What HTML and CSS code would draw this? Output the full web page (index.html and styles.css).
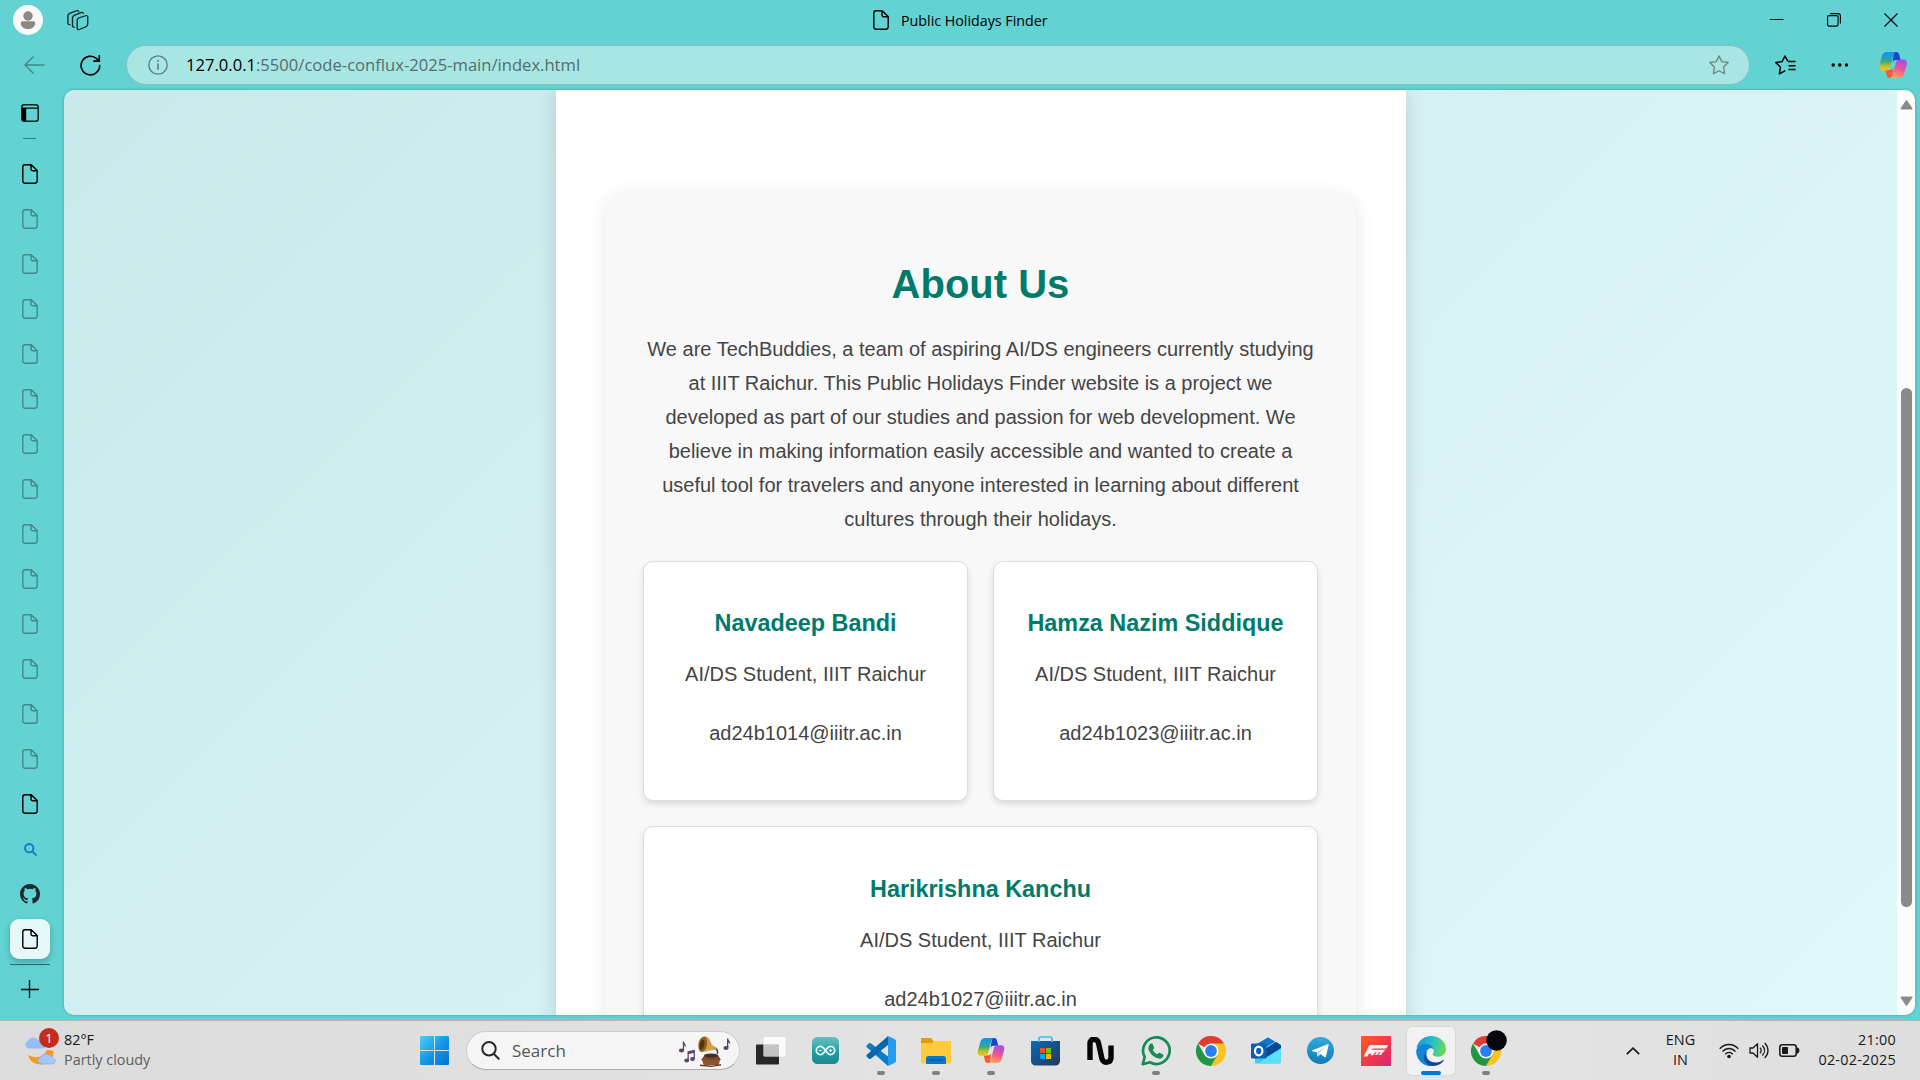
FILE: index.html
```
<!DOCTYPE html>
<html lang="en">
<head>
<meta charset="utf-8">
<title>Public Holidays Finder</title>
<link rel="stylesheet" href="styles.css">
</head>
<body>
<svg class="defs" width="0" height="0">
  <defs>
    <symbol id="doc" viewBox="0 0 16 20"><path d="M3 .8h6.2L15.200 6.500V17a2.200 2.200 0 0 1-2.200 2.200H3A2.200 2.200 0 0 1 .8 17V3A2.200 2.200 0 0 1 3 .8zM9 1v4a1.800 1.800 0 0 0 1.800 1.800H15" fill="none" stroke="currentColor" stroke-width="1.400" stroke-linejoin="round"/></symbol>
    <linearGradient id="cp1" x1="0" y1="0" x2="0" y2="1"><stop offset=".1" stop-color="#1496ee"/><stop offset=".5" stop-color="#3aa888"/><stop offset=".75" stop-color="#b5c22a"/><stop offset="1" stop-color="#f8c51b"/></linearGradient>
    <linearGradient id="cp2" x1=".6" y1="0" x2=".3" y2="1"><stop offset="0" stop-color="#a64df0"/><stop offset=".5" stop-color="#f0568f"/><stop offset="1" stop-color="#ffa65a"/></linearGradient>
    <symbol id="copilot" viewBox="0 0 28 26">
      <path d="M15 0h2.500c1.500 0 2.300 1 2.700 2.500L21.500 8H17c-2 0-3 1-3.500 3z" fill="#1747c9"/>
      <path d="M13 26h-2.500c-1.600 0-2.400-1-2.800-2.500L6.400 18H11c2 0 3-1 3.500-3z" fill="#f25c38"/>
      <path d="M8 0h9c-1.500.4-2.200 1.600-2.700 3.500L11 15.500c-.6 2-1.700 3-3.700 3H3.500C.5 18.500-.4 16 .4 13L3 4C3.800 1.400 5.400 0 8 0z" fill="url(#cp1)"/>
      <path d="M20 26h-9c1.500-.4 2.200-1.600 2.700-3.500L17 10.500c.6-2 1.700-3 3.700-3h3.800c3 0 3.900 2.500 3.100 5.500L25 22c-.8 2.600-2.400 4-5 4z" fill="url(#cp2)"/>
    </symbol>
    <symbol id="chrome" viewBox="0 0 30 30">
      <path d="M15 15 2 7.500A15 15 0 0 1 28 7.500z" fill="#e33b2e"/>
      <path d="M15 7.500H28A15 15 0 0 1 15 30l6.500-11.300z" fill="#fcc320"/>
      <path d="M2 7.500A15 15 0 0 0 15 30l6.500-11.300L8.500 18.800z" fill="#219645"/>
      <circle cx="15" cy="15" r="7.500" fill="#fff"/><circle cx="15" cy="15" r="5.900" fill="#2c7df0"/>
    </symbol>
  </defs>
</svg>
<div class="desktop">
  <header class="titlebar">
    <span class="avatar"><svg width="30" height="30" viewBox="0 0 30 30"><circle cx="15" cy="15" r="15" fill="#f8f8f8"/><circle cx="15" cy="11" r="4.700" fill="#8b8886"/><path d="M9.500 16.300h11a1.700 1.700 0 0 1 1.700 1.900C22 22 19 24 15 24s-7-2-7.200-5.800a1.700 1.700 0 0 1 1.700-1.900z" fill="#8b8886"/></svg></span>
    <svg class="workspaces" width="22" height="21" viewBox="0 0 22 25" preserveAspectRatio="none" fill="none" stroke="#10292a" stroke-width="1.400" stroke-linejoin="round" stroke-linecap="round"><path d="M11.700 9.500 18.500 6.800c1.500-.6 2.200 0 2.200 1.300v9c0 1.500-.5 2.200-1.800 2.800l-6.600 3.300c-1.300.6-2.100.1-2.100-1.300v-9.700c0-1.400.3-2.100 1.500-2.700z"/><path d="M7.500 20.500c-1.300.3-2-.3-2-1.600V9.200c0-1.400.5-2.200 1.700-2.800l6.600-3.300c1.200-.6 2.100-.3 2.400.9"/><path d="M2.900 17.500C1.600 17.700.9 17 .9 15.700V6.800c0-1.400.6-2.200 1.800-2.800L9.300 1c1.200-.6 2-.3 2.300.6"/></svg>
    <div class="title"><svg width="16" height="20"><use href="#doc"/></svg><span class="title-text">Public Holidays Finder</span></div>
    <div class="window-controls">
      <svg width="14" height="14"><path d="M0 6.500h13.500" stroke="#000"/></svg>
      <svg width="14" height="14" fill="none" stroke="#000" stroke-width="1.100"><rect x=".6" y="2.600" width="10.500" height="10.500" rx="1.500"/><path d="M3.200.6h7.800a2.400 2.400 0 0 1 2.400 2.400v7.500"/></svg>
      <svg width="14" height="14"><path d="M.5.500l13 13m0-13-13 13" stroke="#000" stroke-width="1.100"/></svg>
    </div>
  </header>

  <nav class="toolbar">
    <svg class="back" width="21" height="18" viewBox="0 0 21 18" fill="none" stroke="#3c8b8c" stroke-width="1.400"><path d="M20.500 9H1M9.500.5 1 9l8.500 8.500"/></svg>
    <svg class="reload" width="21" height="21" viewBox="0 0 21 21" fill="none" stroke="#000" stroke-width="1.600" stroke-linecap="round"><path d="M19.700 10.500a9.300 9.300 0 1 1-3-6.800l2.500 2.300M19.300.8v5.300h-5.500"/></svg>
    <div class="address">
      <svg width="20" height="20" viewBox="0 0 20 20" fill="none" stroke="#5c7f7e" stroke-width="1.300"><circle cx="10" cy="10" r="9.200"/><path d="M10 8.500v6.300M10 5v1.700" stroke-width="1.600"/></svg>
      <span class="url"><b>127.0.0.1</b>:5500/code-conflux-2025-main/index.html</span>
      <svg width="20" height="20" viewBox="0 0 20 20" fill="none" stroke="#6a8583" stroke-width="1.300" stroke-linejoin="round"><path d="m10 .9 2.800 5.700 6.300.9-4.500 4.500 1 6.700-5.600-3-5.600 3 1-6.700L.9 7.500l6.300-.9z"/></svg>
    </div>
    <svg class="favorites" width="21" height="20" viewBox="0 0 21 20" fill="none" stroke="#000" stroke-width="1.500" stroke-linejoin="round"><path d="m10.300 15.600-5.900 3.200 1-6.800L.9 7.600l6.200-1L10 1l2.600 4.800M12.800 6.600h7.700M13.500 10.700h7M13.500 14.500h7"/></svg>
    <svg class="more" width="18" height="4"><circle cx="2.200" cy="2" r="1.700"/><circle cx="8.800" cy="2" r="1.700"/><circle cx="15.500" cy="2" r="1.700"/></svg>
    <svg class="copilot" width="28" height="26"><use href="#copilot"/></svg>
  </nav>

  <div class="workarea">
    <aside class="tabs">
      <svg class="panel-toggle" width="18" height="18" viewBox="0 0 18 18"><rect x=".8" y=".8" width="16.400" height="16.400" rx="2.500" fill="none" stroke="#0a2424" stroke-width="1.500"/><path d="M.8 4h4.400v13.200H3A2.200 2.200 0 0 1 .8 15zM.8 3.500h16.400v1.200H.8z"/></svg>
      <i class="short-rule"></i>
      <span class="tab"><svg width="16" height="20"><use href="#doc"/></svg></span>
      <span class="tab asleep"><svg width="16" height="20"><use href="#doc"/></svg></span>
      <span class="tab asleep"><svg width="16" height="20"><use href="#doc"/></svg></span>
      <span class="tab asleep"><svg width="16" height="20"><use href="#doc"/></svg></span>
      <span class="tab asleep"><svg width="16" height="20"><use href="#doc"/></svg></span>
      <span class="tab asleep"><svg width="16" height="20"><use href="#doc"/></svg></span>
      <span class="tab asleep"><svg width="16" height="20"><use href="#doc"/></svg></span>
      <span class="tab asleep"><svg width="16" height="20"><use href="#doc"/></svg></span>
      <span class="tab asleep"><svg width="16" height="20"><use href="#doc"/></svg></span>
      <span class="tab asleep"><svg width="16" height="20"><use href="#doc"/></svg></span>
      <span class="tab asleep"><svg width="16" height="20"><use href="#doc"/></svg></span>
      <span class="tab asleep"><svg width="16" height="20"><use href="#doc"/></svg></span>
      <span class="tab asleep"><svg width="16" height="20"><use href="#doc"/></svg></span>
      <span class="tab asleep"><svg width="16" height="20"><use href="#doc"/></svg></span>
      <span class="tab"><svg width="16" height="20"><use href="#doc"/></svg></span>
      <span class="tab"><svg width="13" height="13" viewBox="0 0 13 13" fill="none" stroke="#1a76c8" stroke-width="1.900"><circle cx="5.200" cy="5.200" r="4.200"/><path d="m8.300 8.300 4.200 4.200"/></svg></span>
      <span class="tab"><svg width="20" height="20" viewBox="0 0 16 16" fill="#24292f"><path d="M8 0C3.580 0 0 3.580 0 8c0 3.540 2.290 6.530 5.470 7.590.4.070.55-.17.55-.38 0-.19-.01-.82-.01-1.490-2.010.37-2.530-.49-2.690-.94-.09-.23-.48-.94-.82-1.130-.28-.15-.68-.52-.01-.53.630-.01 1.080.58 1.230.82.720 1.210 1.870.87 2.330.66.070-.52.280-.87.510-1.070-1.780-.2-3.640-.89-3.640-3.950 0-.87.310-1.590.82-2.150-.08-.2-.36-1.020.08-2.120 0 0 .67-.21 2.200.82a7.500 7.500 0 0 1 4 0c1.530-1.040 2.200-.82 2.200-.82.440 1.100.16 1.920.08 2.120.51.560.82 1.270.82 2.150 0 3.070-1.870 3.750-3.650 3.950.290.25.540.73.540 1.480 0 1.070-.01 1.930-.01 2.200 0 .21.150.46.550.38A8 8 0 0 0 16 8c0-4.420-3.580-8-8-8z"/></svg></span>
      <span class="tab active"><svg width="16" height="20"><use href="#doc"/></svg></span>
      <i class="long-rule"></i>
      <svg class="new-tab" width="18" height="18"><path d="M8.500 0v18M0 9.500h18" stroke="#000" stroke-width="1.300"/></svg>
    </aside>

    <div class="viewport">
      <main class="page">
        <div class="container">
          <section class="about">
            <h1>About Us</h1>
            <p class="intro">We are TechBuddies, a team of aspiring AI/DS engineers currently studying at IIIT Raichur. This Public Holidays Finder website is a project we developed as part of our studies and passion for web development. We believe in making information easily accessible and wanted to create a useful tool for travelers and anyone interested in learning about different cultures through their holidays.</p>
            <div class="team">
              <article class="member"><h3>Navadeep Bandi</h3><p>AI/DS Student, IIIT Raichur</p><p>ad24b1014@iiitr.ac.in</p></article>
              <article class="member"><h3>Hamza Nazim Siddique</h3><p>AI/DS Student, IIIT Raichur</p><p>ad24b1023@iiitr.ac.in</p></article>
              <article class="member wide"><h3>Harikrishna Kanchu</h3><p>AI/DS Student, IIIT Raichur</p><p>ad24b1027@iiitr.ac.in</p></article>
            </div>
          </section>
        </div>
      </main>
      <div class="scrollbar">
        <svg width="13" height="10"><path d="M6.500 1 11.700 8.800H1.300z" fill="#8a8a8a" stroke="#8a8a8a" stroke-width="1.600" stroke-linejoin="round"/></svg>
        <i class="thumb"></i>
        <svg width="13" height="10"><path d="M6.500 9 11.700 1.200H1.300z" fill="#8a8a8a" stroke="#8a8a8a" stroke-width="1.600" stroke-linejoin="round"/></svg>
      </div>
    </div>
  </div>

  <footer class="taskbar">
    <div class="weather">
      <svg width="36" height="36" viewBox="0 0 36 36"><path d="M4 22c2 6 6 9.500 13 9.500C24 31.500 30 26 29.500 18c-4-1-7-2-8 1-2 5-10 7-17.500 3z" fill="#f29a26"/><path d="M4 15.500a4 4 0 0 1 0-7.500 6 6 0 0 1 10-1 5 5 0 0 1 6 4 3 3 0 0 1 0 4.500z" fill="#94bdf5"/><path d="M17 31a3.500 3.500 0 0 1-.5-6.800 5.500 5.500 0 0 1 8.500-2 5 5 0 0 1 4 3 3 3 0 0 1 0 5.800z" fill="#a2c8fa" stroke="#7fa9ea" stroke-width=".6"/></svg>
      <span class="badge">1</span>
      <div class="weather-text"><span>82°F</span><span class="muted">Partly cloudy</span></div>
    </div>
    <div class="apps">
      <svg class="start" width="29" height="29" viewBox="0 0 29 29"><defs><linearGradient id="win" gradientUnits="userSpaceOnUse" x1="0" y1="0" x2="29" y2="29"><stop offset="0" stop-color="#4ad0fb"/><stop offset=".55" stop-color="#1493e3"/><stop offset="1" stop-color="#0472ce"/></linearGradient></defs><path fill="url(#win)" d="M1 0h13v14H0V1a1 1 0 0 1 1-1zM15 0h13a1 1 0 0 1 1 1v13H15zM0 15h14v14H1a1 1 0 0 1-1-1zM15 15h14v13a1 1 0 0 1-1 1H15z"/></svg>
      <div class="search">
        <svg width="19" height="19" viewBox="0 0 19 19" fill="none" stroke="#262626" stroke-width="2" stroke-linecap="round"><circle cx="8" cy="7.800" r="6.700"/><path d="m13 13 4.700 4.700"/></svg>
        <span class="search-label">Search</span>
        <svg width="54" height="32" viewBox="0 0 54 32">
          <g fill="#5b4664"><ellipse cx="3.500" cy="15.500" rx="2.600" ry="2"/><path d="M4.800 15V6.500h1.300c0 2 2.500 3 1.700 6-.5-1.500-1.500-2-1.700-2v5zM49 13V3.500h1.300c0 2 2.600 3 1.800 6-.5-1.500-1.600-2-1.800-2V13z"/><ellipse cx="48" cy="13" rx="2.600" ry="2"/><ellipse cx="8.700" cy="25.500" rx="2.400" ry="1.900"/><ellipse cx="14.500" cy="24" rx="2.400" ry="1.900"/><path d="M9.500 25V16.200l7.400-1.400V24h-1.300v-6l-4.800 1v6z"/></g>
          <path d="m23 25 3-4 14-1 3 5z" fill="#7f4929"/><path d="M24 25h18l-1.200 5L26 31z" fill="#8c5234"/><path d="M22 29.500 33 31l10-2v1.500L33 32l-11-1z" fill="#653722"/><ellipse cx="33" cy="20.500" rx="7" ry="2" fill="#39302a"/><path d="M32 14.500c5-2 8-1.500 7.500 4.500" stroke="#494044" stroke-width="1.500" fill="none"/>
          <path d="M25 2c5-2.500 7 3 8.500 7 1.500 2 3 3 5.500 3.500-2 3-6 3-8.500 3-4 2-8 2-9.500-2.500C19.500 8 21 3.500 25 2z" fill="#d59d49"/><ellipse cx="24.800" cy="9.400" rx="4.200" ry="7.700" transform="rotate(12 24.800 9.400)" fill="#8f5b20"/><ellipse cx="24" cy="9.600" rx="2.200" ry="5" transform="rotate(12 24 9.600)" fill="#51310f"/>
        </svg>
      </div>
      <span class="app"><svg width="30" height="28" viewBox="0 0 30 28"><rect y="7.500" width="23" height="20" rx="1" fill="#272727"/><rect x="7.500" width="22" height="19.500" rx="1" fill="#fff" opacity=".82"/><path d="M7.500 7.500H23v12H8.500a1 1 0 0 1-1-1z" fill="#bcbcbc" opacity=".75"/></svg></span>
      <span class="app"><svg width="27" height="27" viewBox="0 0 27 27"><defs><linearGradient id="ard" x1="0" y1="0" x2="0" y2="1"><stop offset="0" stop-color="#68bfc1"/><stop offset=".6" stop-color="#1f9ca0"/><stop offset="1" stop-color="#20878b"/></linearGradient></defs><rect width="27" height="27" rx="5.500" fill="url(#ard)"/><path d="M13.500 13.500C11.500 10.500 10.500 9.300 8.500 9.300a4.200 4.200 0 0 0 0 8.400c2 0 3-1.200 5-4.200s3-4.200 5-4.200a4.200 4.200 0 0 1 0 8.400c-2 0-3-1.200-5-4.200z" fill="none" stroke="#e3f5f5" stroke-width="1.800"/><path d="M7 13.500h3M17 13.500h3M18.500 12v3" stroke="#e3f5f5" stroke-width="1"/></svg></span>
      <span class="app running"><svg width="30" height="30" viewBox="0 0 30 30"><path d="M22 0v30L.8 11.200a1.500 1.500 0 0 1 0-2L3 7.300a1.500 1.500 0 0 1 1.800 0L22 20.500z" fill="#0a7dc6"/><path d="M22 0v9L4.800 22.700a1.500 1.500 0 0 1-1.800 0l-2.200-2a1.500 1.500 0 0 1 0-2z" fill="#0868ab"/><path d="M22 0 28.500 3A2.500 2.500 0 0 1 30 5.300v19.400a2.500 2.500 0 0 1-1.500 2.300L22 30z" fill="#279cec"/></svg></span>
      <span class="app running"><svg width="30" height="27" viewBox="0 0 30 27"><path d="M1 1h9l2.500 3H30v3H0V2a1 1 0 0 1 1-1z" fill="#df9c05"/><path d="M0 6h11l2-2h16a1 1 0 0 1 1 1v20.500a1 1 0 0 1-1 1H1a1 1 0 0 1-1-1z" fill="#ffcb3c"/><path d="M5 27v-5.500A2.500 2.500 0 0 1 7.500 19h15a2.500 2.500 0 0 1 2.500 2.500V27z" fill="#0878cd"/><path d="M8 23h14" stroke="#06498c" stroke-width="1"/></svg></span>
      <span class="app running"><svg width="28" height="25"><use href="#copilot"/></svg></span>
      <span class="app"><svg class="store" width="29" height="30" viewBox="0 0 29 30"><defs><linearGradient id="st" x1="0" y1="0" x2="1" y2="1"><stop offset="0" stop-color="#086cb9"/><stop offset="1" stop-color="#263757"/></linearGradient></defs><path d="M0 5h29v20a4.500 4.500 0 0 1-4.500 4.500h-20A4.500 4.500 0 0 1 0 25z" fill="url(#st)"/><path d="M8 6V2.800C8 1.600 8.600 1 9.800 1h9.400c1.200 0 1.800.6 1.800 1.800V6" fill="none" stroke="#35c1f1" stroke-width="1.700"/><path fill="#f25022" d="M9 12h5v5H9z"/><path fill="#7fba00" d="M15 12h5v5h-5z"/><path fill="#00a4ef" d="M9 18h5v5H9z"/><path fill="#ffb900" d="M15 18h5v5h-5z"/></svg></span>
      <span class="app"><svg width="27" height="28" viewBox="0 0 27 28"><path d="M3 23V6.500C3 1 10 1 11.500 6l3.500 16c1.500 5 9 4 9-1.500V8.500" fill="none" stroke="#050505" stroke-width="5.400"/></svg></span>
      <span class="app running"><svg width="30" height="30" viewBox="0 0 30 30"><path d="M1.800 28.200 3.700 21A13.300 13.300 0 1 1 9 26.300z" fill="none" stroke="#178a55" stroke-width="2.700" stroke-linejoin="round"/><path d="M10 7.500h1.500L13.200 12l-1.400 2c1 2 2.500 3.400 4.500 4.300l1.800-1.700 4.200 2.200v1.500c-.8 2-3 2.700-4.500 2.300-5-1.300-8.700-4.600-10.300-9C7 11.500 8 8.500 10 7.500z" fill="#178a55"/></svg></span>
      <span class="app"><svg width="30" height="30"><use href="#chrome"/></svg></span>
      <span class="app"><svg width="30" height="27" viewBox="0 0 30 27"><path d="M4 8 17 .6 30 8v16a2.500 2.500 0 0 1-2.500 2.500H4z" fill="#3bcdf5"/><path d="M4 8 17 .6 24 4.500 10 13H4z" fill="#1277c9"/><path d="m14 12 11-7 5 3.300V11L14 21z" fill="#0b469a"/><path d="m15 21 15-9v12a2.500 2.500 0 0 1-2.500 2.500H8z" fill="#5de0fb"/><rect y="6.500" width="15.500" height="15" rx="1.300" fill="#115ead"/><ellipse cx="7.700" cy="14" rx="3.700" ry="4.300" fill="none" stroke="#fff" stroke-width="2.200"/></svg></span>
      <span class="app"><svg width="27" height="27" viewBox="0 0 27 27"><defs><linearGradient id="tg" x1="0" y1="0" x2="0" y2="1"><stop offset="0" stop-color="#32a9e2"/><stop offset="1" stop-color="#127ab3"/></linearGradient></defs><circle cx="13.500" cy="13.500" r="13.500" fill="url(#tg)"/><path d="M5.500 13.300 20.500 7.200c.8-.3 1.200.2 1 1l-2.500 11.300c-.2 1-.8 1.100-1.600.6l-4-3-2 2.200c-.5.500-1 .3-1-.5l-.8-3.500-4-1c-.8-.3-.9-.7-.1-1z" fill="#fff"/><path d="m10 15.500 8.500-6-6.500 7-.3 3.300z" fill="#a9d3e9"/></svg></span>
      <span class="app"><svg width="30" height="30" viewBox="0 0 30 30"><defs><linearGradient id="fz" x1="0" y1="0" x2="1" y2="1"><stop offset="0" stop-color="#ff5d20"/><stop offset=".5" stop-color="#f23b47"/><stop offset="1" stop-color="#d92475"/></linearGradient></defs><path d="M0 0h30v30H0z" fill="url(#fz)"/><path d="M8.500 9h18.700l-2 3.500H13.500c-1.500 0-2.500.4-3.300 1.200h14.200l-3 3.300-1.400 2h-2.400l2-2.800h-1.500l-2 2.800h-2.400l2-2.800h-1.500l-2.200 3h-2.400l1-1.500H8L6.300 20.400H2.600z" fill="#fff1f1"/></svg></span>
      <span class="app running current"><svg width="30" height="30" viewBox="0 0 30 30"><defs><linearGradient id="e1" x1="0" y1=".3" x2="1" y2=".5"><stop offset="0" stop-color="#1b96d3"/><stop offset=".5" stop-color="#29bccc"/><stop offset="1" stop-color="#69dc4d"/></linearGradient><linearGradient id="e2" x1="0" y1="0" x2=".8" y2="1"><stop offset="0" stop-color="#0d63bd"/><stop offset="1" stop-color="#123f86"/></linearGradient></defs><path d="M.5 12C2 5 7.500 0 15 0c8.500 0 15 6 15 13 0 5-3.800 7.700-7.800 7.700-3.700 0-5.400-1.200-5.400-2.300 0-.8 1.200-1.300 1.200-3.600 0-3-3-5.200-7-5.200C6 9.600 2 10.500.5 12z" fill="url(#e1)"/><path d="M.2 15.500C.2 11 5 7.500 10 8c4 .3 7.500 2.500 8 6-1.500-2-4-2.200-5.500-1-4 3.500-2.500 12.500 5 17A15 15 0 0 1 .2 15.500z" fill="#0f87d5"/><path d="M10.500 16c-1.500 6 3 10.500 9.500 10.500 3 0 5.500-1.500 7-2.500.7-.3 1 .1.600.8C24.500 29 20 30 16.800 29.900 10 29.500 7 24 8 19.500c.3-1.500 1.200-2.800 2.500-3.500z" fill="url(#e2)"/></svg></span>
      <span class="app running"><svg class="profiled" width="36" height="36" viewBox="0 0 36 36"><use href="#chrome" x="0" y="6" width="30" height="30"/><circle cx="25.500" cy="10.500" r="10.300" fill="#05080d"/></svg></span>
    </div>
    <div class="tray">
      <svg width="14" height="8"><path d="m.8 7.200 6.200-6 6.200 6" fill="none" stroke="#191919" stroke-width="1.700"/></svg>
      <div class="lang"><span>ENG</span><span>IN</span></div>
      <svg width="20" height="16" viewBox="0 0 20 16" fill="none" stroke="#191919" stroke-width="1.400"><path d="M.7 5.700c5.400-5.600 13.200-5.600 18.600 0M3.500 8.500c3.800-4 9.200-4 13 0M6.200 11.200c2.200-2.400 5.400-2.400 7.600 0"/><circle cx="10" cy="13.500" r="1.800" fill="#191919" stroke="none"/></svg>
      <svg width="20" height="17" viewBox="0 0 20 17" fill="none" stroke="#191919" stroke-width="1.300" stroke-linejoin="round"><path d="M1 6h3l4.500-4.300v13.600L4 11H1zM11 5.700c1.600 1.600 1.600 4 0 5.600M13.300 3.500c3 3 3 7 0 10M15.700 1c4.400 4.500 4.400 10.500 0 15"/></svg>
      <svg width="21" height="13" viewBox="0 0 21 13"><rect x=".8" y=".8" width="16.400" height="11.400" rx="2.500" fill="none" stroke="#191919" stroke-width="1.500"/><rect x="3" y="3" width="6" height="7" rx=".7" fill="#191919"/><path d="M18 4h.8c1.500 0 1.500 5 0 5H18z" fill="#191919" stroke="#191919"/></svg>
      <div class="clock"><span>21:00</span><span>02-02-2025</span></div>
    </div>
  </footer>
</div>
</body>
</html>
```
FILE: styles.css
```
* { box-sizing: border-box; }
body { margin: 0; overflow: hidden; }
svg { display: block; flex: none; }
.defs { position: absolute; }

.desktop {
  width: 1920px;
  height: 1080px;
  display: flex;
  flex-direction: column;
  background: #62d2d2;
  color: #000;
  font-family: "Open Sans", "Noto Sans", sans-serif;
}

/* Title bar */
.titlebar { height: 40px; display: flex; align-items: center; padding: 0 22px 0 13px; }
.workspaces { margin-left: 24px; }
.title { display: flex; align-items: center; gap: 12px; margin-left: 784px; }
.title-text { font-size: 14.250px; line-height: 20px; white-space: nowrap; padding-top: 1px; }
.window-controls { display: flex; gap: 43px; margin-left: auto; }

/* Toolbar */
.toolbar { height: 50px; display: flex; align-items: center; padding-left: 24px; }
.reload { margin-left: 35px; }
.address {
  width: 1624px;
  height: 40px;
  margin-left: 24.500px;
  padding: 0 20px 0 21px;
  display: flex;
  align-items: center;
  border: 1px solid #86bfbd;
  border-radius: 20px;
  background: #a8e6e4;
}
.url { flex: 1; padding-left: 18.500px; font-size: 16.600px; line-height: 24px; color: #566d6c; white-space: nowrap; }
.url b { color: #000; font-weight: 400; }
.favorites { margin-left: 25.500px; }
.more { margin-left: 35px; }
.copilot { margin-left: 30px; }

/* Vertical tabs and page */
.workarea { height: 930px; display: flex; }
.tabs { width: 64px; padding: 14px 0 0 10px; display: flex; flex-direction: column; }
.panel-toggle { margin-left: 11px; }
.short-rule { width: 13px; height: 1px; margin: 16px 0 15px 13px; background: #2f8384; }
.tab { width: 40px; height: 40px; margin-bottom: 5px; display: flex; flex: none; align-items: center; justify-content: center; }
.asleep { color: #43898a; }
.active { border-radius: 9px; background: #e6f8f8; box-shadow: 0 3px 6px rgba(0, 60, 60, .3); }
.long-rule { width: 40px; height: 1px; background: #2c6b6b; }
.new-tab { margin: 15px 0 0 11px; }

.viewport {
  width: 1851px;
  height: 925px;
  display: flex;
  border-radius: 10px;
  overflow: hidden;
  box-shadow: 0 0 3px rgba(0, 70, 70, .35);
}
.page {
  width: 1833px;
  display: flex;
  justify-content: center;
  overflow: hidden;
  background: linear-gradient(135deg, #c9e9eb, #d6f1f4 50%, #dff7fb);
  font-family: "Liberation Sans", Arial, sans-serif;
  text-align: center;
}
.container { width: 850px; height: 1200px; flex: none; padding: 101px 50px 0; background: #fff; box-shadow: 0 0 19px rgba(0, 0, 0, .14); }
.about { height: 1000px; padding: 68px 37.500px 0; border-radius: 19px; background: #f8f8f8; box-shadow: 0 5px 19px rgba(0, 0, 0, .1); }
.about h1 { margin: 0; font-size: 40px; line-height: 50px; color: #007a6a; }
.intro { margin: 23px 0 25px; font-size: 20px; line-height: 34px; color: #444; }
.team { display: grid; grid-template-columns: 1fr 1fr; gap: 25px; }
.member { height: 240px; padding-top: 42px; border: 1px solid #ddd; border-radius: 10px; background: #fff; box-shadow: 0 3px 6px rgba(0, 0, 0, .12); font-size: 20px; color: #444; }
.member h3 { margin: 0 0 15px; font-size: 23.400px; line-height: 38px; color: #007a6a; }
.member p { margin: 0 0 25px; line-height: 34px; }
.wide { grid-column: span 2; padding-top: 43px; }

.scrollbar { width: 18px; padding: 10px 0 9px; display: flex; flex-direction: column; align-items: center; background: #fcfcfc; }
.thumb { width: 11px; height: 519px; margin: 278px 0 auto; border-radius: 6px; background: #8a8a8a; }

/* Taskbar */
.taskbar {
  height: 60px;
  display: flex;
  align-items: center;
  border-top: 1px solid #b5b3b3;
  background: linear-gradient(90deg, #dcdcdc, #e3e3e3 50%, #e3e3e3 80%, #dedede);
  font-size: 14.400px;
  line-height: 20px;
  color: #1a1a1a;
}
.weather { width: 420px; padding-left: 24px; display: flex; align-items: center; position: relative; }
.badge { position: absolute; left: 39px; top: -2px; width: 20px; height: 20px; border-radius: 50%; background: #c42b1c; color: #fff; font-size: 13px; text-align: center; }
.weather-text { display: flex; flex-direction: column; padding: 0 0 2px 4px; white-space: nowrap; }
.muted { color: #5e5e5e; }
.apps { display: flex; align-items: center; }
.search { width: 274px; height: 39px; margin: 0 3px 0 17px; padding: 0 7px 0 14px; display: flex; align-items: center; border: 1px solid #cdcdcd; border-bottom-color: #aaa; border-radius: 20px; background: #f5f5f5; }
.search-label { flex: 1; padding-left: 12px; font-size: 17px; color: #555; }
.app { width: 55px; height: 48px; position: relative; display: flex; align-items: center; justify-content: center; }
.running::after { content: ""; position: absolute; bottom: 0; width: 8px; height: 4px; border-radius: 2px; background: #808080; }
.current::before { content: ""; position: absolute; z-index: 0; width: 48px; height: 48px; border-radius: 5px; background: #f1f1f1; box-shadow: 0 0 1px 1px #d9d9d9; }
.current svg { position: relative; }
.current::after { width: 20px; background: #0078d4; }
.profiled { margin: -6px 0 0 6px; }
.tray { margin-left: auto; padding-right: 24px; display: flex; align-items: center; }
.lang { width: 54px; margin: 0 11px 0 14px; }
.lang, .clock { display: flex; flex-direction: column; align-items: center; padding-bottom: 2px; }
.tray svg + svg { margin-left: 10px; }
.clock { width: 78px; margin-left: 18.500px; align-items: flex-end; white-space: nowrap; letter-spacing: .25px; }
```
